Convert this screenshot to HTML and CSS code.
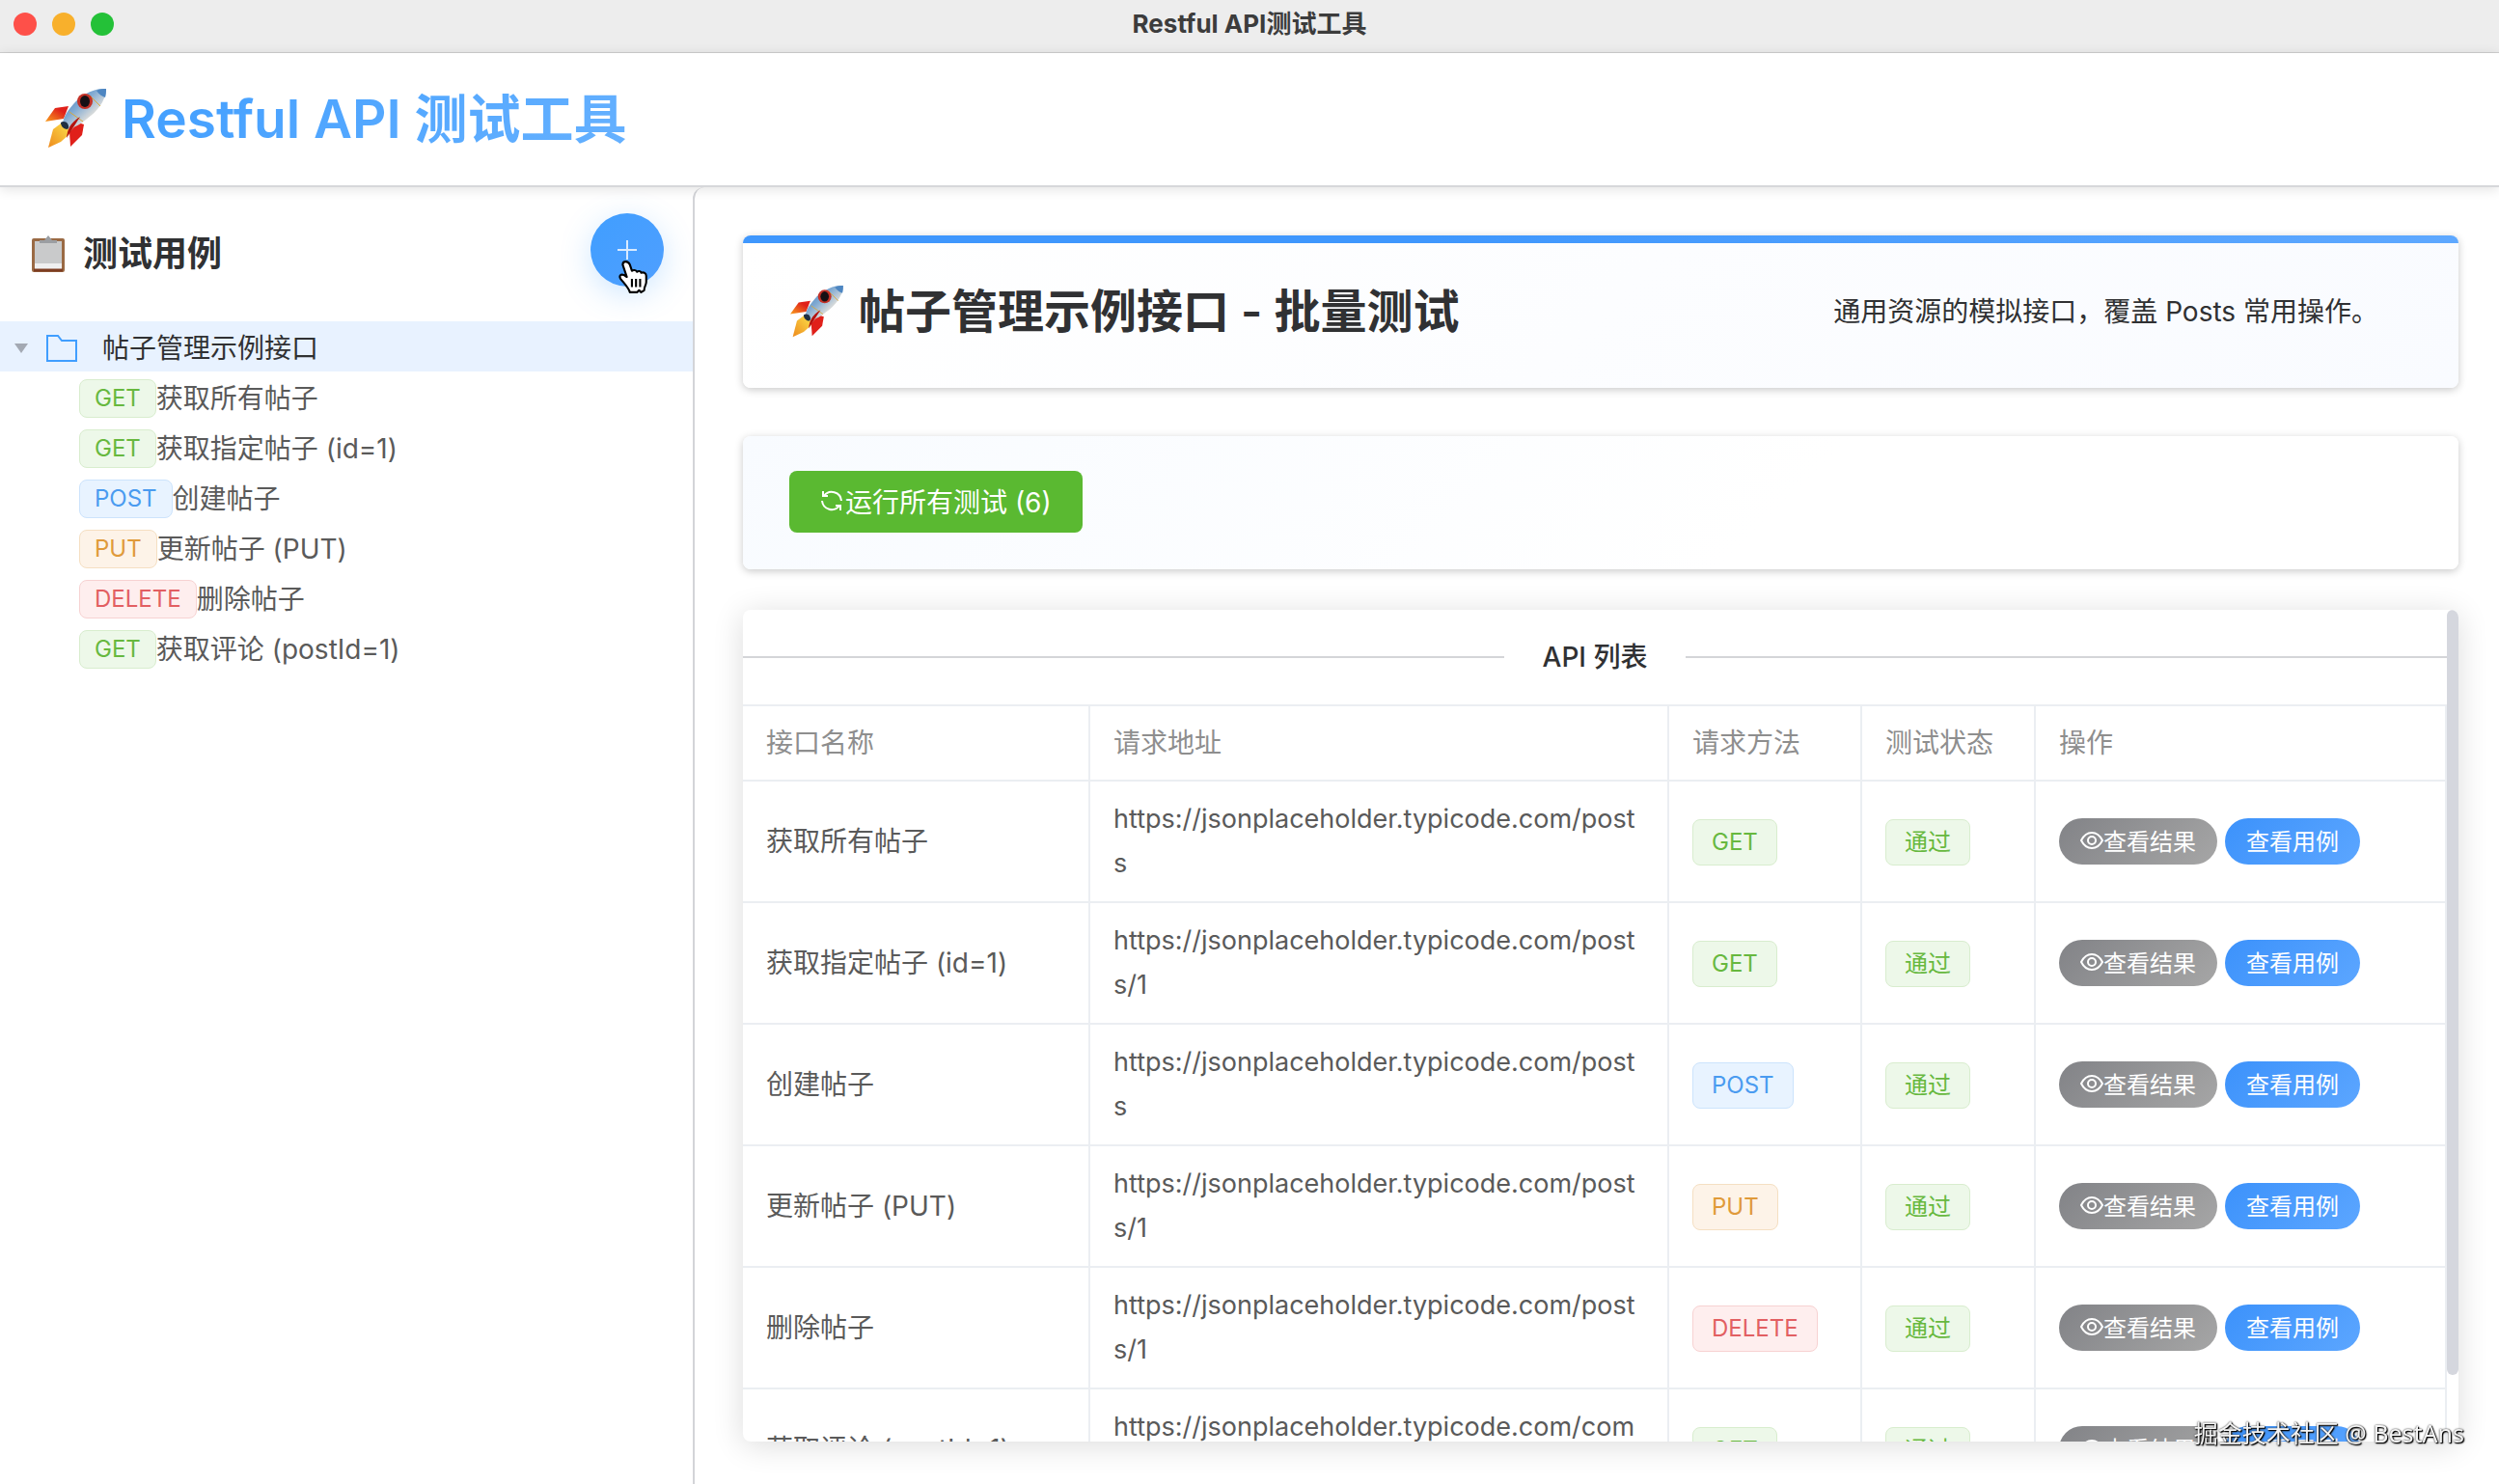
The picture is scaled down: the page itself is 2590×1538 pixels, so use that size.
FILE: index.html
```html
<!DOCTYPE html>
<html lang="zh-CN">
<head>
  <meta charset="UTF-8">
  <meta name="viewport" content="width=device-width, initial-scale=1.0">
  <title>Restful API测试工具</title>
  <link rel="stylesheet" href="styles.css">
</head>
<body>
  <svg class="sprite" aria-hidden="true">
    <defs>
      <linearGradient id="hull" x1="0" y1="0" x2="1" y2="1">
        <stop offset="0" stop-color="#3b78b8"/>
        <stop offset="0.4" stop-color="#7fa9d2"/>
        <stop offset="0.65" stop-color="#d5d9da"/>
        <stop offset="1" stop-color="#777b80"/>
      </linearGradient>
      <linearGradient id="fin" x1="1" y1="0" x2="0" y2="1">
        <stop offset="0.3" stop-color="#e0201a"/>
        <stop offset="1" stop-color="#f9a01e"/>
      </linearGradient>
      <linearGradient id="flame" x1="1" y1="0" x2="0" y2="1">
        <stop offset="0" stop-color="#fbe04a"/>
        <stop offset="1" stop-color="#ee8a1d"/>
      </linearGradient>
    </defs>
    <symbol id="rocket" viewBox="0 0 64 62">
      <path d="M25 18 11 20 1 34 20 31z" fill="url(#fin)"/>
      <path d="M41 37 39 48 27 60 26 45 35 35z" fill="#e0201a"/>
      <path d="M17 36 9 42 4 61 17 55 26 47 24 39z" fill="url(#flame)"/>
      <path d="M64 0C51-1 38 7 30 16c-5 6-10 12-11 20l6 5c7-1 12-4 18-9C55 23 63 14 64 0z" fill="url(#hull)"/>
      <path d="M54 2c3 4 6 6 9 7 1-3 1-6 1-9-3 0-7 0-10 2z" fill="#4d86c2"/>
      <path d="M26 24 40 34M46 6 58 18" stroke="#d8a93c" stroke-width="1" fill="none"/>
      <path d="M17 35c2-2 6-1 7 1s2 4 0 6c-4 0-7-3-7-7z" fill="#1f2f42"/>
      <path d="M37 29 23 51c1-9 3-15 14-22z" fill="#b3130f"/>
      <ellipse cx="42" cy="13" rx="8" ry="8" fill="#c33127"/>
      <ellipse cx="42" cy="13" rx="5" ry="6" fill="#161014"/>
    </symbol>
    <symbol id="eye" viewBox="0 0 24 24">
      <path d="M1 12C4 6 8 4 12 4s8 2 11 8c-3 6-7 8-11 8S4 18 1 12z" fill="none" stroke="currentColor" stroke-width="2"/>
      <circle cx="12" cy="12" r="4" fill="none" stroke="currentColor" stroke-width="2"/>
    </symbol>
  </svg>

  <div class="titlebar">
    <div class="lights">
      <span class="light red"></span>
      <span class="light yellow"></span>
      <span class="light green"></span>
    </div>
    <strong class="window-title">Restful API测试工具</strong>
  </div>

  <header class="header">
    <svg class="logo"><use href="#rocket"/></svg>
    <h1>Restful API 测试工具</h1>
  </header>

  <div class="layout">
    <aside class="sidebar">
      <div class="sidebar-header">
        <svg class="clipboard" viewBox="0 0 36 40">
          <rect x="1" y="4" width="34" height="35" rx="2" fill="#9a6a44"/>
          <rect x="4" y="7" width="28" height="29" fill="#c9cacb"/>
          <path d="M4 30h28v6H4z" fill="#efeff0"/>
          <path d="M9 9V6h5l4-5 4 5h5v3z" fill="#9b9ea2"/>
          <path d="M3 37h30" stroke="#7d3d22" stroke-width="3"/>
        </svg>
        <h2>测试用例</h2>
        <button class="add-btn" aria-label="新增">
          <svg viewBox="0 0 20 20"><path d="M10 0v20M0 10h20" stroke="#d8eaff" stroke-width="2"/></svg>
        </button>
        <svg class="cursor" viewBox="0 0 30 34">
          <path d="M8 2c2 0 3 1 4 3l2 6c1-1 4-1 5 1 1-1 4-1 4 1 2-1 5 0 5 3v6c0 3-2 4-2 8l-3 2-2-2-2 2h-7c-1-4-5-8-9-13-2-3 0-5 3-4l3 2L5 5c0-2 1-3 3-3z" fill="#fff" stroke="#000" stroke-width="2" stroke-linejoin="round"/>
          <path d="M14 19v8M18 19v8M22 19v8" stroke="#000" stroke-width="2"/>
        </svg>
      </div>

      <ul class="tree">
        <li class="tree-root">
          <svg class="arrow" viewBox="0 0 14 10"><path d="M0 0h14L7 10z" fill="#a3a9b3"/></svg>
          <svg class="folder" viewBox="0 0 32 28"><path d="M1 1h11l4 5h15v21H1z" fill="none" stroke="#409eff" stroke-width="2"/></svg>
          <span>帖子管理示例接口</span>
        </li>
        <li><span class="tag success">GET</span>获取所有帖子</li>
        <li><span class="tag success">GET</span>获取指定帖子 (id=1)</li>
        <li><span class="tag primary">POST</span>创建帖子</li>
        <li><span class="tag warning">PUT</span>更新帖子 (PUT)</li>
        <li><span class="tag danger">DELETE</span>删除帖子</li>
        <li><span class="tag success">GET</span>获取评论 (postId=1)</li>
      </ul>
    </aside>

    <main class="main">
      <section class="card intro">
        <svg class="intro-icon"><use href="#rocket"/></svg>
        <h2>帖子管理示例接口 - 批量测试</h2>
        <p>通用资源的模拟接口，覆盖 Posts 常用操作。</p>
      </section>

      <section class="card actions">
        <button class="run-btn">
          <svg viewBox="0 0 24 24" fill="none" stroke="currentColor" stroke-width="2">
            <path d="M3 2v5h5M4 7A10 10 0 0 1 22 12M21 22v-5h-5M20 17A10 10 0 0 1 2 12"/>
          </svg>
          <span>运行所有测试 (6)</span>
        </button>
      </section>

      <section class="card list">
        <div class="list-body">
          <div class="divider"><span>API 列表</span></div>
          <table>
            <colgroup>
              <col class="col-name">
              <col class="col-url">
              <col class="col-method">
              <col class="col-status">
              <col>
            </colgroup>
            <thead>
              <tr><th>接口名称</th><th>请求地址</th><th>请求方法</th><th>测试状态</th><th>操作</th></tr>
            </thead>
            <tbody>
              <tr>
                <td>获取所有帖子</td>
                <td class="url">https://jsonplaceholder.typicode.com/posts</td>
                <td><span class="tag large success">GET</span></td>
                <td><span class="tag large success">通过</span></td>
                <td><div class="ops"><button class="pill gray"><svg><use href="#eye"/></svg>查看结果</button><button class="pill blue">查看用例</button></div></td>
              </tr>
              <tr>
                <td>获取指定帖子 (id=1)</td>
                <td class="url">https://jsonplaceholder.typicode.com/posts/1</td>
                <td><span class="tag large success">GET</span></td>
                <td><span class="tag large success">通过</span></td>
                <td><div class="ops"><button class="pill gray"><svg><use href="#eye"/></svg>查看结果</button><button class="pill blue">查看用例</button></div></td>
              </tr>
              <tr>
                <td>创建帖子</td>
                <td class="url">https://jsonplaceholder.typicode.com/posts</td>
                <td><span class="tag large primary">POST</span></td>
                <td><span class="tag large success">通过</span></td>
                <td><div class="ops"><button class="pill gray"><svg><use href="#eye"/></svg>查看结果</button><button class="pill blue">查看用例</button></div></td>
              </tr>
              <tr>
                <td>更新帖子 (PUT)</td>
                <td class="url">https://jsonplaceholder.typicode.com/posts/1</td>
                <td><span class="tag large warning">PUT</span></td>
                <td><span class="tag large success">通过</span></td>
                <td><div class="ops"><button class="pill gray"><svg><use href="#eye"/></svg>查看结果</button><button class="pill blue">查看用例</button></div></td>
              </tr>
              <tr>
                <td>删除帖子</td>
                <td class="url">https://jsonplaceholder.typicode.com/posts/1</td>
                <td><span class="tag large danger">DELETE</span></td>
                <td><span class="tag large success">通过</span></td>
                <td><div class="ops"><button class="pill gray"><svg><use href="#eye"/></svg>查看结果</button><button class="pill blue">查看用例</button></div></td>
              </tr>
              <tr>
                <td>获取评论 (postId=1)</td>
                <td class="url">https://jsonplaceholder.typicode.com/comments?postId=1</td>
                <td><span class="tag large success">GET</span></td>
                <td><span class="tag large success">通过</span></td>
                <td><div class="ops"><button class="pill gray"><svg><use href="#eye"/></svg>查看结果</button><button class="pill blue">查看用例</button></div></td>
              </tr>
            </tbody>
          </table>
        </div>
        <div class="scrollbar"><div class="thumb"></div></div>
      </section>
    </main>
  </div>

  <div class="watermark">掘金技术社区 @ BestAns</div>
</body>
</html>
```
FILE: styles.css
```css
* { box-sizing: border-box; }
body { margin: 0; height: 100vh; display: flex; flex-direction: column; overflow: hidden; font-family: Inter, "Noto Sans CJK SC", sans-serif; font-size: 28px; color: #303133; background: #fff; }
h1, h2, p, ul { margin: 0; padding: 0; }
button { font-family: inherit; border: none; cursor: pointer; }
.sprite { position: absolute; width: 0; height: 0; }

/* window bar */
.titlebar { flex: none; height: 55px; display: grid; grid-template-columns: 1fr auto 1fr; align-items: center; padding: 0 14px 4px; background: #ededed; border-bottom: 1px solid #cfcfcf; }
.lights { display: flex; gap: 16px; }
.light { width: 24px; height: 24px; border-radius: 50%; }
.red { background: #fe5049; }
.yellow { background: #f8b02c; }
.green { background: #24c138; }
.window-title { font-size: 26px; line-height: 36px; color: #3c3c3c; }

/* header */
.header { flex: none; height: 139px; display: flex; align-items: center; gap: 16px; padding: 0 46px 2px; position: relative; z-index: 1; background: #fff; border-bottom: 2px solid #d6d7da; box-shadow: 0 2px 12px rgba(0,0,0,0.12); }
.logo { width: 64px; height: 62px; }
h1 { font-size: 55px; line-height: 80px; font-weight: 600; color: transparent; background: linear-gradient(135deg, #409eff, #66b1ff); background-clip: text; -webkit-background-clip: text; }

.layout { flex: 1; min-height: 0; display: flex; }

/* sidebar */
.sidebar { width: 718px; flex: none; }
.sidebar-header { height: 139px; display: flex; align-items: center; padding: 0 30px 10px 32px; position: relative; }
.clipboard { width: 36px; height: 40px; margin-top: 8px; }
.sidebar-header h2 { flex: 1; margin-left: 18px; padding-top: 8px; font-size: 36px; line-height: 52px; font-weight: 600; }
.add-btn { width: 76px; height: 76px; padding: 0; display: grid; place-items: center; border-radius: 50%; background: linear-gradient(135deg, #409eff, #4f9fff); box-shadow: 0 8px 32px rgba(64,158,255,0.25); }
.add-btn svg { width: 20px; height: 20px; }
.cursor { position: absolute; top: 75px; right: 46px; width: 32px; height: 36px; }
.tree { list-style: none; }
.tree li { height: 52px; display: flex; align-items: center; padding: 3px 0 0 82px; line-height: 40px; color: #5a5a5a; }
.tree .tree-root { padding-left: 15px; background: #e8f2ff; color: #303133; }
.arrow { width: 14px; height: 10px; }
.folder { width: 32px; height: 28px; margin: 0 26px 0 19px; }

/* tags */
.tag { display: inline-flex; align-items: center; height: 40px; padding: 0 15px; font-size: 24px; line-height: 36px; border: 1px solid; border-radius: 8px; }
.large { height: 48px; padding: 0 19px; }
.success { color: #67b83f; background: #edf8e9; border-color: #d8edce; }
.primary { color: #4a9bf0; background: #e8f3ff; border-color: #cce3fc; }
.warning { color: #e09a3a; background: #fdf3e8; border-color: #f5dfc2; }
.danger { color: #e25f62; background: #feeeee; border-color: #f7d2d2; }

/* content */
.main { flex: 1; min-width: 0; display: flex; flex-direction: column; padding: 50px 42px 44px 50px; border-left: 2px solid #d3d4d8; border-top-left-radius: 12px; }
.card { border-radius: 8px; background: #fff; box-shadow: 0 2px 8px rgba(0,0,0,0.22); }
.intro { display: flex; align-items: center; height: 158px; margin-bottom: 50px; padding: 0 83px 0 48px; background: linear-gradient(90deg, #3f97fd 40%, #5ea8ff) top / 100% 8px no-repeat, linear-gradient(135deg, #fff, #f9fbff); }
.intro-icon { width: 56px; height: 54px; margin-right: 16px; }
.intro h2 { flex: 1; font-size: 48px; line-height: 70px; font-weight: 600; }
.intro p { line-height: 40px; }
.actions { height: 138px; margin-bottom: 42px; padding: 36px 48px; background: linear-gradient(135deg, #f8fbff, #fff 60%); }
.run-btn { height: 64px; display: flex; align-items: center; gap: 2px; padding: 0 32px 3px; border-radius: 8px; font-size: 28px; color: #fff; background: #5ab931; }
.run-btn svg { width: 24px; height: 24px; flex: none; }

/* api list */
.list { flex: 1; min-height: 0; display: flex; overflow: hidden; box-shadow: 0 4px 32px rgba(0,0,0,0.14); }
.list-body { flex: 1; min-width: 0; }
.divider { height: 98px; display: flex; align-items: center; gap: 40px; line-height: 40px; font-weight: 500; }
.divider::before, .divider::after { content: ""; flex: 1; height: 2px; background: #d4d5d8; }
table { width: 100%; table-layout: fixed; border-collapse: separate; border-spacing: 0; border-top: 2px solid #ebeef2; color: #5a5a5a; }
.col-name { width: 360px; }
.col-url { width: 600px; }
.col-method { width: 200px; }
.col-status { width: 180px; }
th, td { padding: 0 24px; text-align: left; border-right: 2px solid #ebeef2; border-bottom: 2px solid #ebeef2; line-height: 46px; }
th { height: 78px; font-weight: 400; color: #8e8e8e; }
td { height: 126px; }
.url { font-size: 27px; word-break: break-all; }
td .tag { vertical-align: middle; }
.ops { display: flex; gap: 8px; }
.pill { height: 48px; display: flex; align-items: center; padding: 0 22px 3px; border-radius: 24px; font-size: 24px; color: #fff; }
.pill svg { width: 24px; height: 24px; }
.gray { background: linear-gradient(135deg, #828387, #a6a6a6); }
.blue { background: linear-gradient(135deg, #3c92fb, #5ca6ff); }
.scrollbar { width: 12px; flex: none; }
.thumb { height: 92%; border-radius: 6px; background: #d5d7de; }

.watermark { position: fixed; right: 36px; bottom: 36px; font-family: "Noto Sans", "Noto Sans CJK SC", sans-serif; font-size: 25px; line-height: 34px; color: #f4f4f4; text-shadow: 1px 1px 1px #000, 0 0 2px #333, 1px 1px 2px #333; }
```
